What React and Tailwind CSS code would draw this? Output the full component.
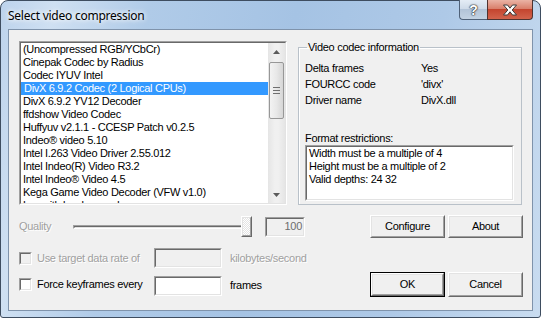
import React from "react";

const codecs = [
  "(Uncompressed RGB/YCbCr)",
  "Cinepak Codec by Radius",
  "Codec IYUV Intel",
  "DivX 6.9.2 Codec (2 Logical CPUs)",
  "DivX 6.9.2 YV12 Decoder",
  "ffdshow Video Codec",
  "Huffyuv v2.1.1 - CCESP Patch v0.2.5",
  "Indeo® video 5.10",
  "Intel I.263 Video Driver 2.55.012",
  "Intel Indeo(R) Video R3.2",
  "Intel Indeo® Video 4.5",
  "Kega Game Video Decoder (VFW v1.0)",
  "Lagarith lossless codec",
];

const selected = 3;

function Sunken({ className = "", inner = "", children }) {
  return (
    <div className={`border border-t-[#a0a0a0] border-l-[#a0a0a0] border-b-white border-r-white ${className}`}>
      <div className={`h-full w-full border border-t-[#696969] border-l-[#696969] border-b-[#e3e3e3] border-r-[#e3e3e3] ${inner}`}>
        {children}
      </div>
    </div>
  );
}

function Button({ children, isDefault, className = "" }) {
  const face = (
    <div className="h-full w-full border border-t-white border-l-white border-b-[#696969] border-r-[#696969]">
      <div className="flex h-full w-full items-center justify-center border border-t-[#e3e3e3] border-l-[#e3e3e3] border-b-[#a0a0a0] border-r-[#a0a0a0] bg-[#f0f0f0] pb-px">
        {children}
      </div>
    </div>
  );
  if (isDefault) {
    return <div className={`border border-black ${className}`}>{face}</div>;
  }
  return <div className={className}>{face}</div>;
}

function Checkbox({ disabled }) {
  return (
    <Sunken
      className="h-[13px] w-[13px] shrink-0"
      inner={disabled ? "bg-[#f0f0f0]" : "bg-white"}
    />
  );
}

function Arrow({ down }) {
  return (
    <svg width="7" height="4" viewBox="0 0 7 4">
      {down ? (
        <path d="M0 0h7L3.5 4z" fill="#5b5b5b" />
      ) : (
        <path d="M0 4h7L3.5 0z" fill="#5b5b5b" />
      )}
    </svg>
  );
}

function ScrollBar() {
  return (
    <div className="flex w-[17px] flex-col bg-[linear-gradient(90deg,#e5e5e5,#f0f0f0_40%,#f0f0f0_60%,#e5e5e5)]">
      <div className="flex h-[17px] items-center justify-center">
        <Arrow />
      </div>
      <div className="mx-px mt-[2px] flex h-[57px] flex-col items-center justify-center gap-[2px] rounded-[2px] border border-[#979797] bg-[linear-gradient(90deg,#f3f3f3,#e8e8e8_50%,#d6d6d6)]">
        <div className="h-px w-[7px] bg-[#6f6f6f]" />
        <div className="h-px w-[7px] bg-[#6f6f6f]" />
        <div className="h-px w-[7px] bg-[#6f6f6f]" />
      </div>
      <div className="flex-1" />
      <div className="flex h-[17px] items-center justify-center">
        <Arrow down />
      </div>
    </div>
  );
}

function TitleButtons() {
  return (
    <div className="-mt-px flex h-[20px]">
      <div className="flex w-[28px] items-center justify-center rounded-bl-[4px] border border-r-0 border-t-0 border-[#4f6178] bg-[linear-gradient(180deg,#e4ecf5_0%,#cfdbe9_45%,#b3c4d8_50%,#c3d2e3_100%)]">
        <span className="text-[14px] font-bold leading-none text-white [text-shadow:0_0_1px_#222,0_0_1px_#222,0_0_2px_#333]">
          ?
        </span>
      </div>
      <div className="flex w-[46px] items-center justify-center rounded-br-[4px] border border-t-0 border-[#4f3330] bg-[linear-gradient(180deg,#eab3a5_0%,#d9806c_45%,#c4452f_50%,#d2634c_100%)]">
        <svg width="16" height="12" viewBox="0 0 16 12">
          <path
            d="M1.5 1h4L8 4.2 10.5 1h4l-4.3 5 4.3 5h-4L8 7.8 5.5 11h-4l4.3-5z"
            fill="#ffffff"
            stroke="#3a3a3a"
            strokeWidth="1"
            strokeLinejoin="round"
          />
        </svg>
      </div>
    </div>
  );
}

export default function App() {
  return (
    <div className="h-[318px] w-[541px] bg-white font-['Liberation_Sans',Arial,sans-serif] text-[11px] tracking-[-0.3px] text-black">
      <div className="flex h-full w-full flex-col rounded-t-[8px] rounded-b-[3px] border border-[#3e4d60] bg-[linear-gradient(100deg,#bdd3ec_0%,#cfe0f2_9%,#b0cbe8_25%,#a5c3e4_50%,#aec9e7_75%,#c9dcf0_100%)]">
        <div className="flex h-[28px] items-start justify-between pl-[7px] pr-[7px]">
          <span className="mt-[6px] font-['Noto_Sans',sans-serif] text-[12px] tracking-[-0.25px] text-black [text-shadow:0_0_6px_#ffffff,0_0_4px_#ffffff]">
            Select video compression
          </span>
          <TitleButtons />
        </div>

        <div className="mx-[7px] mb-[6px] flex flex-1 flex-col border border-[#7f93ab] bg-[#f0f0f0] pl-[10px] pt-[11px]">
          <div className="flex h-[164px] items-start">
            <Sunken className="h-[164px] w-[268px]" inner="flex bg-white">
              <div className="flex-1 overflow-hidden">
                {codecs.map((name, i) => (
                  <div
                    key={name}
                    className={`h-[13px] whitespace-nowrap pl-[2px] leading-[13px] ${
                      i === selected ? "bg-[#3399ff] pl-[3px] text-white" : ""
                    }`}
                  >
                    {name}
                  </div>
                ))}
              </div>
              <ScrollBar />
            </Sunken>

            <fieldset className="ml-[11px] h-[164px] w-[224px] border border-[#b9c1c9] px-[6px] shadow-[inset_1px_1px_0_#ffffff]">
              <legend className="ml-[2px] px-[1px] leading-[13px]">
                Video codec information
              </legend>
              <div className="mt-[6px] grid grid-cols-[116px_1fr] leading-[16px]">
                <span>Delta frames</span>
                <span>Yes</span>
                <span>FOURCC code</span>
                <span>'divx'</span>
                <span>Driver name</span>
                <span>DivX.dll</span>
              </div>
              <div className="mt-[24px] leading-[13px]">Format restrictions:</div>
              <Sunken className="h-[56px] w-[209px]" inner="bg-white pl-[2px] leading-[13px]">
                <div>Width must be a multiple of 4</div>
                <div>Height must be a multiple of 2</div>
                <div>Valid depths: 24 32</div>
              </Sunken>
            </fieldset>
          </div>

          <div className="mt-[10px] flex h-[23px] items-center">
            <span className="w-[54px] text-[#a0a0a0] [text-shadow:1px_1px_0_#ffffff]">
              Quality
            </span>
            <div className="relative flex h-[23px] w-[180px] items-center">
              <Sunken className="h-[4px] w-[178px]" inner="bg-[#f0f0f0]" />
              <div className="absolute right-[1px] top-[1px] h-[21px] w-[11px] border border-t-white border-l-white border-b-[#696969] border-r-[#696969]">
                <div className="h-full w-full border border-t-[#e3e3e3] border-l-[#e3e3e3] border-b-[#a0a0a0] border-r-[#a0a0a0] bg-[repeating-conic-gradient(#ffffff_0%_25%,#e3e3e3_0%_50%)] bg-[length:2px_2px]" />
              </div>
            </div>
            <Sunken
              className="ml-[12px] h-[20px] w-[40px]"
              inner="flex items-center justify-end bg-[#f0f0f0] pr-[1px] text-[#6d6d6d]"
            >
              100
            </Sunken>
            <div className="ml-[65px] flex gap-[3px]">
              <Button className="h-[23px] w-[75px]">Configure</Button>
              <Button className="h-[23px] w-[75px]">About</Button>
            </div>
          </div>

          <div className="mt-[10px] flex h-[20px] items-center">
            <Checkbox disabled />
            <span className="w-[122px] pl-[5px] text-[#a0a0a0] [text-shadow:1px_1px_0_#ffffff]">
              Use target data rate of
            </span>
            <Sunken className="h-[20px] w-[68px]" inner="bg-[#f0f0f0]" />
            <span className="ml-[8px] text-[#a0a0a0] [text-shadow:1px_1px_0_#ffffff]">
              kilobytes/second
            </span>
          </div>

          <div className="mt-[4px] flex h-[25px] items-center">
            <Checkbox />
            <span className="w-[122px] pl-[5px]">Force keyframes every</span>
            <Sunken className="mt-[3px] h-[20px] w-[68px]" inner="bg-white" />
            <span className="ml-[8px] mt-[2px] w-[140px]">frames</span>
            <div className="flex gap-[3px]">
              <Button isDefault className="h-[25px] w-[75px]">
                OK
              </Button>
              <Button className="h-[25px] w-[75px]">Cancel</Button>
            </div>
          </div>
        </div>
      </div>
    </div>
  );
}
